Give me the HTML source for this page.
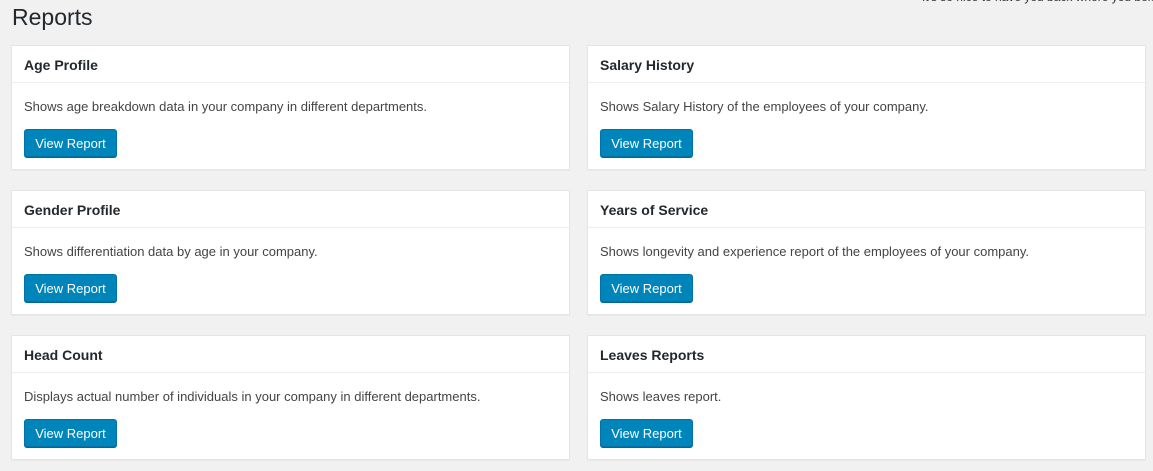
<!DOCTYPE html>
<html><head><style>
body{margin:0;background:#f1f1f1;font-family:"Liberation Sans",sans-serif;color:#23282d;width:1153px;height:471px;overflow:hidden;position:relative}
h1{position:absolute;left:12px;top:4px;margin:0;font-weight:400;font-size:23px;color:#23282d}
.top{position:absolute;left:922px;top:-10px;font-size:12px;color:#333;white-space:nowrap}
.card{position:absolute;background:#fff;border:1px solid #e5e5e5;box-shadow:0 1px 1px rgba(0,0,0,.04);box-sizing:border-box;width:559px;height:125px}
.card .h{height:36px;border-bottom:1px solid #eee;font-weight:bold;font-size:14px;line-height:38px;padding-left:12px}
.card p{margin:0;position:absolute;left:12px;top:53px;font-size:13px;color:#444}
.btn{position:absolute;left:12px;top:83px;width:93px;height:28px;box-sizing:border-box;background:#0085ba;border:1px solid #0073aa;border-radius:3px;box-shadow:0 1px 0 #006799;color:#fff;font-size:13px;line-height:28px;text-align:center}
</style></head><body>
<div class="top">It's so nice to have you back where you belong</div>
<h1>Reports</h1>
<div class="card" style="left:11px;top:45px"><div class="h">Age Profile</div><p>Shows age breakdown data in your company in different departments.</p><div class="btn">View Report</div></div>
<div class="card" style="left:587px;top:45px"><div class="h">Salary History</div><p>Shows Salary History of the employees of your company.</p><div class="btn">View Report</div></div>
<div class="card" style="left:11px;top:190px"><div class="h">Gender Profile</div><p>Shows differentiation data by age in your company.</p><div class="btn">View Report</div></div>
<div class="card" style="left:587px;top:190px"><div class="h">Years of Service</div><p>Shows longevity and experience report of the employees of your company.</p><div class="btn">View Report</div></div>
<div class="card" style="left:11px;top:335px"><div class="h">Head Count</div><p>Displays actual number of individuals in your company in different departments.</p><div class="btn">View Report</div></div>
<div class="card" style="left:587px;top:335px"><div class="h">Leaves Reports</div><p>Shows leaves report.</p><div class="btn">View Report</div></div>
</body></html>
